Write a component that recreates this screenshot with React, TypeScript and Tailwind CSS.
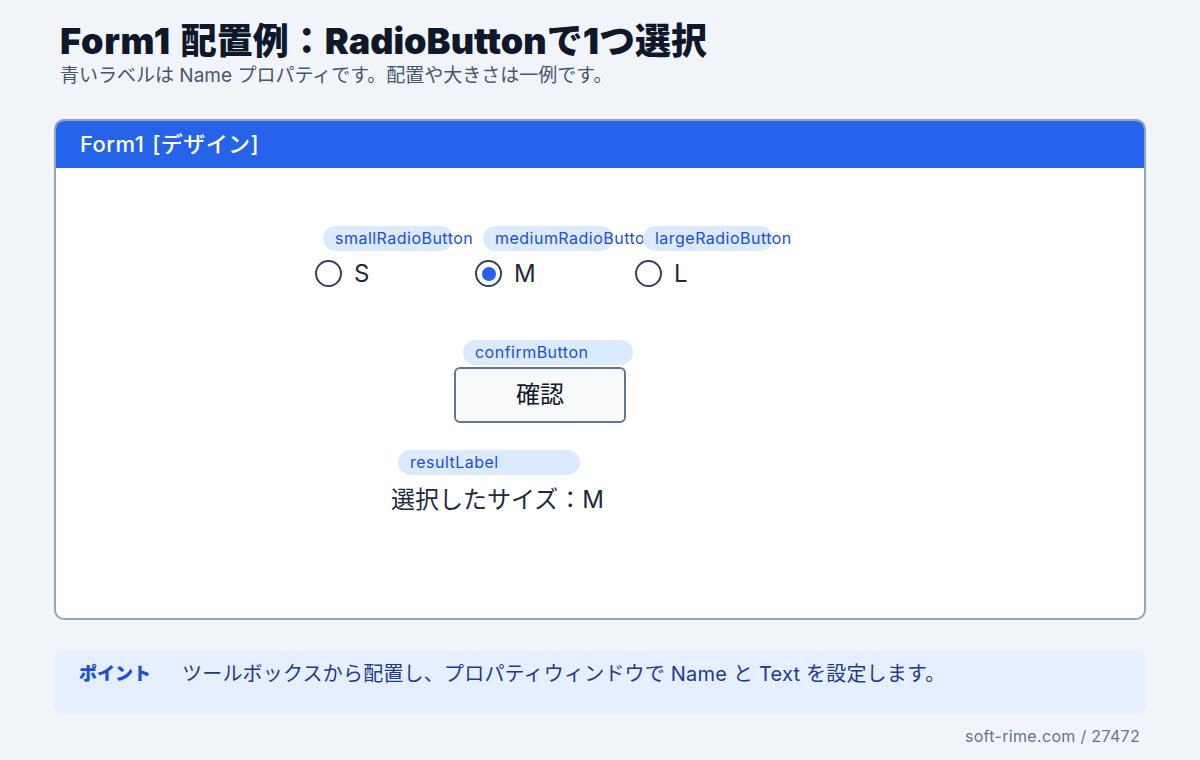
const font = {
  fontFamily: '"Inter", "Noto Sans CJK JP", sans-serif',
};

// blue Name tag shown above each control on the design surface
function Tag({ name, width }: { name: string; width: string }) {
  return (
    <div
      className={`relative h-[25px] rounded-full bg-[#dbeafe] pl-3 text-[16px] leading-[25px] tracking-[0.03em] text-[#1d4ed8] whitespace-nowrap ${width}`}
    >
      {name}
    </div>
  );
}

function Radio({ name, label, checked }: { name: string; label: string; checked?: boolean }) {
  return (
    <div className="flex w-[160px] flex-col items-start">
      <div className="ml-2">
        <Tag name={name} width="w-[130px]" />
      </div>
      <div className="mt-[9px] flex items-center gap-[12px]">
        <span className="flex h-[27px] w-[27px] items-center justify-center rounded-full border-2 border-[#334155] bg-white">
          {checked && <span className="h-[14px] w-[14px] rounded-full bg-[#2563eb]" />}
        </span>
        <span className="text-[24px] leading-none text-[#1e293b]">{label}</span>
      </div>
    </div>
  );
}

export default function App() {
  return (
    <div style={font} className="min-h-[760px] w-[1200px] bg-[#f1f5f9] px-[54px] pt-[19px]">
      <h1 className="ml-[6px] text-[36px] font-black leading-[44px] text-[#0f172a]">
        <span className="mr-[10px] tracking-[0.02em]">Form1</span>配置例：RadioButtonで1つ選択
      </h1>
      <p className="ml-[6px] text-[19px] leading-[26px] text-[#475569]">
        青いラベルは Name プロパティです。配置や大きさは一例です。
      </p>

      {/* form window */}
      <div className="mt-[30px] h-[501px] overflow-hidden rounded-[10px] border-2 border-[#94a3b8] bg-white">
        <div className="flex h-[47px] items-center bg-[#2563eb] px-[24px] text-[22px] font-medium tracking-[0.02em] text-white">
          <span className="mr-[8px]">Form1</span>[デザイン]
        </div>
        <div className="relative h-[450px]">
          <div className="absolute left-[259px] top-[58px] flex">
            <Radio name="smallRadioButton" label="S" />
            <Radio name="mediumRadioButton" label="M" checked />
            <Radio name="largeRadioButton" label="L" />
          </div>

          <div className="absolute left-[398px] top-[172px] flex flex-col items-start">
            <div className="ml-[9px]">
              <Tag name="confirmButton" width="w-[170px]" />
            </div>
            <button className="mt-[2px] h-[56px] w-[172px] rounded-[6px] border-2 border-[#64748b] bg-[#f8fafc] text-[24px] text-[#0f172a]">
              確認
            </button>
          </div>

          <div className="absolute left-[335px] top-[282px] flex flex-col items-start">
            <div className="ml-[7px]">
              <Tag name="resultLabel" width="w-[182px]" />
            </div>
            <div className="mt-[9px] text-[24px] leading-[32px] text-[#1e293b]">選択したサイズ：M</div>
          </div>
        </div>
      </div>

      {/* note */}
      <div className="mt-[30px] flex h-[64px] items-start gap-[31px] rounded-[8px] bg-[#e5efff] px-[25px] pt-[11px]">
        <span className="text-[18px] font-black leading-[26px] text-[#1d4ed8]">ポイント</span>
        <span className="text-[20px] leading-[26px] tracking-[0.01em] text-[#1e3a8a]">
          ツールボックスから配置し、プロパティウィンドウで Name と Text を設定します。
        </span>
      </div>

      <div className="mt-[10px] pr-[6px] text-right text-[16px] leading-[24px] tracking-[0.02em] text-[#64748b]">
        soft-rime.com / 27472
      </div>
    </div>
  );
}
